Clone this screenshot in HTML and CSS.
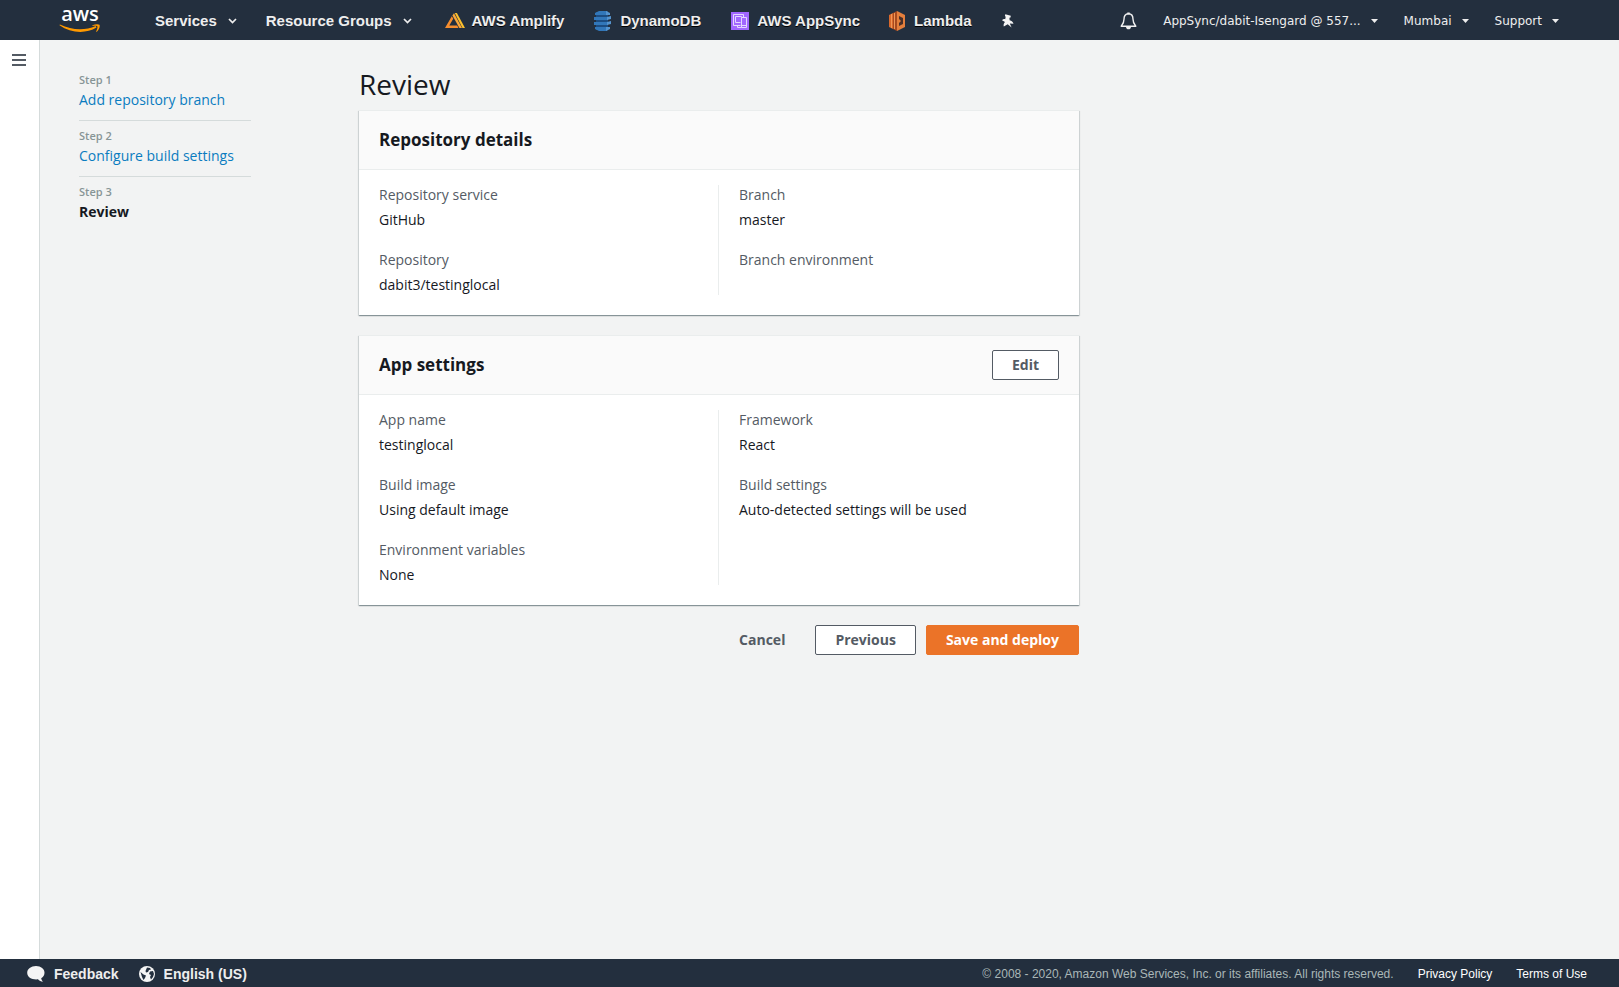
FILE: index.html
```html
<!DOCTYPE html>
<html lang="en">
<head>
<meta charset="utf-8">
<title>AWS Amplify Console</title>
<link rel="stylesheet" href="styles.css">
</head>
<body class="page">
<header class="topbar">
  <a class="logo" href="#" aria-label="AWS home">
    <span class="logo-text">aws</span>
    <svg width="42" height="10" viewBox="0 0 42 10">
      <path d="M.5 1.200C12 9.500 27 10 37.500 3.600l-.8-1.500C26 6.800 13 6.500.9.600z" fill="#f90"/>
      <path d="M33.500 1.200c2.500-1.200 6-1.400 7-.4.800 1.500-.6 5.200-2.700 7-.4.300-.7.100-.6-.3.700-1.900 1.600-4.200 1.200-5-.5-.8-2.800-.7-4.700-.6-.5 0-.6-.4-.2-.7z" fill="#f90"/>
    </svg>
  </a>
  <nav class="shortcuts" aria-label="Services">
    <button class="menu" type="button">Services
      <svg width="9" height="6" viewBox="0 0 9 6"><path d="M1 1l3.500 3.500L8 1" fill="none" stroke="#eee" stroke-width="1.700"/></svg>
    </button>
    <button class="menu" type="button">Resource Groups
      <svg width="9" height="6" viewBox="0 0 9 6"><path d="M1 1l3.500 3.500L8 1" fill="none" stroke="#eee" stroke-width="1.700"/></svg>
    </button>
    <a class="shortcut shortcut-first" href="#">
      <svg width="20" height="20" viewBox="0 0 20 20">
        <path d="M6.800 5.300l1.500 2.500L4.300 14.500h7.900l1.300 2.500H0z" fill="#f68d2e"/>
        <path d="M7.400 4.600L9 2.200 17 17h-2.600z" fill="#f9a63a"/>
        <path d="M9.700 2h2.200L20 17h-2.500z" fill="#fbc02d"/>
      </svg>AWS Amplify</a>
    <a class="shortcut" href="#">
      <svg width="20" height="20" viewBox="0 0 20 20">
        <path d="M3 1h12v18H3z" fill="#1c4c80"/>
        <path d="M2 2l4-2h8l1 1v3H2zM1 6h14v3H1zM1 11h14v3H1zM2 16h13v3l-2 1H6l-4-2z" fill="#3277b9"/>
        <path d="M13 0l4 2v2h-4zM14 6l4-1v3l-4 1zM14 11l4-1v3l-4 1zM13 16h4v2l-4 2z" fill="#5594cf"/>
      </svg>DynamoDB</a>
    <a class="shortcut" href="#">
      <svg width="20" height="20" viewBox="0 0 20 20">
        <path d="M1 1h18v18H1z" fill="#a166ff"/>
        <g fill="none" stroke="#e5d7ff"><path d="M10.500 14.500h-7v-11h10v3M5.500 5.500h6v1M5.500 5.500v6h5M11.500 6.500h5v10h-5zM7.500 14.500v2h4M12 14.500h4"/></g>
      </svg>AWS AppSync</a>
    <a class="shortcut" href="#">
      <svg class="narrow-icon" width="16" height="20" viewBox="0 0 16 20">
        <path d="M0 4l4-2v16l-4-2z" fill="#d9692c"/><path d="M4 2l4-2v20l-4-2z" fill="#a64a20"/>
        <path d="M2.500 3v14M5.500 2v16" stroke="#f19655" fill="none"/>
        <path d="M8 0l8 4v12l-8 4z" fill="#e57f3c"/>
        <path d="M10 5l4 2v6l-4 2z" fill="#4c3028"/><path d="M10 8l2 2-2 2z" fill="#e57f3c"/>
      </svg>Lambda</a>
    <button class="icon-button" type="button" aria-label="Edit shortcuts">
      <svg width="13" height="14" viewBox="0 0 13 14"><path d="M4.300.2L9.800 1.700 9.500 3.600 8.400 3.700 8.600 6.300C10.600 6.900 12 8 12.500 9.700L8.800 9.500 10.600 13.600 6.700 10.200 2.800 12.500C2.300 10.800 2.700 9.200 4 7.900L1 6.300C1.800 5.300 2.900 4.900 4.200 5.200L4.700 2.800 3.900 2z" fill="#f5f5f5"/></svg>
    </button>
  </nav>
  <div class="account">
    <button class="icon-button" type="button" aria-label="Notifications">
      <svg width="17" height="18" viewBox="0 0 17 18"><path d="M8.500 1.800C5 1.800 4 4.500 4 7.200c0 3.800-1.200 5-2.800 7h14.600c-1.600-2-2.800-3.200-2.800-7 0-2.700-1-5.400-4.500-5.400z" fill="none" stroke="#f0f0f0" stroke-width="1.400" stroke-linejoin="round"/><path d="M7.300.5h2.400v2H7.300zM6 15h5c-.2 1.600-1.100 2.300-2.500 2.300S6.200 16.600 6 15z" fill="#f0f0f0"/></svg>
    </button>
    <button class="account-menu" type="button">AppSync/dabit-Isengard @ 557...
      <svg width="7" height="4" viewBox="0 0 7 4"><path d="M0 0h7L3.500 4z" fill="#eee"/></svg></button>
    <button class="account-menu" type="button">Mumbai
      <svg width="7" height="4" viewBox="0 0 7 4"><path d="M0 0h7L3.500 4z" fill="#eee"/></svg></button>
    <button class="account-menu" type="button">Support
      <svg width="7" height="4" viewBox="0 0 7 4"><path d="M0 0h7L3.500 4z" fill="#eee"/></svg></button>
  </div>
</header>

<div class="workspace">
  <aside class="drawer">
    <button class="icon-button" type="button" aria-label="Open navigation">
      <svg width="14" height="12" viewBox="0 0 14 12"><path d="M0 1h14M0 6h14M0 11h14" stroke="#545b64" stroke-width="2"/></svg>
    </button>
  </aside>
  <nav class="steps" aria-label="Steps">
    <ol class="step-list">
      <li class="step"><span class="step-number">Step 1</span><a class="step-link" href="#">Add repository branch</a></li>
      <li class="step"><span class="step-number">Step 2</span><a class="step-link" href="#">Configure build settings</a></li>
      <li class="step"><span class="step-number">Step 3</span><span class="step-current" aria-current="step">Review</span></li>
    </ol>
  </nav>
  <main class="content">
    <h1 class="title">Review</h1>
    <section class="card">
      <div class="card-header"><h2 class="card-title">Repository details</h2></div>
      <div class="card-body">
        <dl class="column">
          <div class="pair"><dt class="label">Repository service</dt><dd class="value">GitHub</dd></div>
          <div class="pair"><dt class="label">Repository</dt><dd class="value">dabit3/testinglocal</dd></div>
        </dl>
        <dl class="column">
          <div class="pair"><dt class="label">Branch</dt><dd class="value">master</dd></div>
          <div class="pair"><dt class="label">Branch environment</dt><dd class="value"></dd></div>
        </dl>
      </div>
    </section>
    <section class="card">
      <div class="card-header"><h2 class="card-title">App settings</h2><button class="button" type="button">Edit</button></div>
      <div class="card-body">
        <dl class="column">
          <div class="pair"><dt class="label">App name</dt><dd class="value">testinglocal</dd></div>
          <div class="pair"><dt class="label">Build image</dt><dd class="value">Using default image</dd></div>
          <div class="pair"><dt class="label">Environment variables</dt><dd class="value">None</dd></div>
        </dl>
        <dl class="column">
          <div class="pair"><dt class="label">Framework</dt><dd class="value">React</dd></div>
          <div class="pair"><dt class="label">Build settings</dt><dd class="value">Auto-detected settings will be used</dd></div>
        </dl>
      </div>
    </section>
    <div class="actions">
      <button class="button button-plain" type="button">Cancel</button>
      <button class="button" type="button">Previous</button>
      <button class="button button-primary" type="submit">Save and deploy</button>
    </div>
  </main>
</div>

<footer class="footer">
  <button class="footer-button" type="button">
    <svg width="18" height="17" viewBox="0 0 18 17"><path d="M9 0c5 0 8.500 3 8.500 6.700 0 2.500-1.300 4.300-3.300 5.500.2 1.600 1 2.800 2 3.600-2.200 0-4-.9-5.200-2.500-6 .6-10.800-2-10.800-6.600C.2 3 4 0 9 0z" fill="#f5f5f5"/></svg>Feedback</button>
  <button class="footer-button" type="button">
    <svg width="16" height="16" viewBox="0 0 16 16"><circle cx="8" cy="8" r="8" fill="#f5f5f5"/><path d="M8 1.500l3 .5 1 1.500-2 .5-1 2-2 .5L6.500 5zM1.500 6l3 2.500 2.500 1L6 12l-1.500 2L3 11zM11 5.500l3-.5 1 3-1 3-2 2.500L11 11l1-2-2-1z" fill="#232f3e"/></svg>English (US)</button>
  <div class="legal">
    <span class="copyright">© 2008 - 2020, Amazon Web Services, Inc. or its affiliates. All rights reserved.</span>
    <a class="legal-link" href="#">Privacy Policy</a>
    <a class="legal-link" href="#">Terms of Use</a>
  </div>
</footer>
</body>
</html>
```
FILE: styles.css
```css
*, *::before, *::after { box-sizing: border-box; }

.page {
  margin: 0;
  min-height: 100vh;
  display: flex;
  flex-direction: column;
  background: #f2f3f3;
  color: #16191f;
  font: 14px/20px "Open Sans", "Noto Sans", sans-serif;
}

button { margin: 0; padding: 0; border: 0; background: none; color: inherit; font: inherit; cursor: pointer; }
a { color: inherit; text-decoration: none; }
svg { display: block; flex: none; }

/* Top bar */
.topbar {
  display: flex;
  align-items: center;
  height: 40px;
  padding: 2px 60px 0 59px;
  background: #232f3e;
  color: #eee;
}
.logo { display: flex; flex-direction: column; align-items: center; margin-right: 54px; padding-bottom: 5px; }
.logo-text { color: #fff; font: 600 20px/20px "Open Sans", sans-serif; }
.shortcuts { display: flex; align-items: center; gap: 29px; font: bold 15px/20px "Liberation Sans", Arial, sans-serif; text-shadow: 0 1px 0 #000; white-space: nowrap; }
.menu { display: flex; align-items: center; gap: 11px; }
.shortcut { display: flex; align-items: center; gap: 7px; }
.shortcut-first { margin-left: 4px; }
.narrow-icon { margin-right: 2px; }
.account { display: flex; align-items: center; gap: 26px; margin-left: auto; font: 12px/20px "DejaVu Sans", Verdana, sans-serif; text-shadow: 0 1px 0 #000; white-space: nowrap; }
.account-menu { display: flex; align-items: center; gap: 10px; }

/* Workspace */
.workspace { display: flex; flex: 1; }
.drawer { flex: none; width: 40px; padding: 14px 12px; background: #fff; border-right: 1px solid #d5dbdb; }
.drawer .icon-button { display: block; }
.steps { flex: none; width: 172px; margin: 30px 108px 0 39px; }
.step-list { margin: 0; padding: 0; list-style: none; }
.step { display: flex; flex-direction: column; height: 56px; }
.step + .step { border-top: 1px solid #d5dbdb; padding-top: 5px; }
.step:first-child { height: 50px; }
.step-number { color: #879596; font-size: 11px; font-weight: 600; }
.step-link { color: #0a7cc0; }
.step-current { font-weight: 700; }

.content { flex: 0 1 720px; padding-top: 24px; }
.title { margin: 0 0 6px; font-size: 28px; line-height: 40px; font-weight: 400; }
.card {
  margin-bottom: 20px;
  background: #fff;
  border-top: 1px solid #eaeded;
  box-shadow: 0 1px 1px rgba(0, 28, 36, .3), 1px 1px 1px rgba(0, 28, 36, .1), -1px 1px 1px rgba(0, 28, 36, .1);
}
.card-header { display: flex; align-items: center; justify-content: space-between; height: 59px; padding: 0 20px; background: #fafafa; border-bottom: 1px solid #eaeded; }
.card-title { margin: 0; font-size: 17px; line-height: 22px; font-weight: 700; }
.card-body { display: grid; grid-template-columns: 1fr 1fr; padding: 15px 0 20px; }
.column { display: flex; flex-direction: column; gap: 20px; margin: 0; padding: 0 20px; }
.column:first-child { border-right: 1px solid #eaeded; }
.label { margin-bottom: 5px; color: #545b64; }
.value { min-height: 20px; margin: 0; }

.actions { display: flex; justify-content: flex-end; gap: 10px; }
.button { height: 30px; padding: 0 19px; border: 1px solid #545b64; border-radius: 2px; background: #fff; color: #545b64; font-weight: 700; }
.button-plain { border-color: transparent; background: none; }
.button-primary { border-color: #eb7328; background: #eb7328; color: #fff; }

/* Footer */
.footer { display: flex; align-items: center; gap: 20px; height: 28px; padding: 2px 32px 0 27px; background: #232f3e; color: #eee; font: 12px/20px "Liberation Sans", Arial, sans-serif; white-space: nowrap; }
.footer-button { display: flex; align-items: center; gap: 9px; font-size: 14px; font-weight: 700; }
.legal { display: flex; gap: 24px; margin-left: auto; }
.copyright { color: #aab7b8; }
.legal-link { color: #fff; }
```
